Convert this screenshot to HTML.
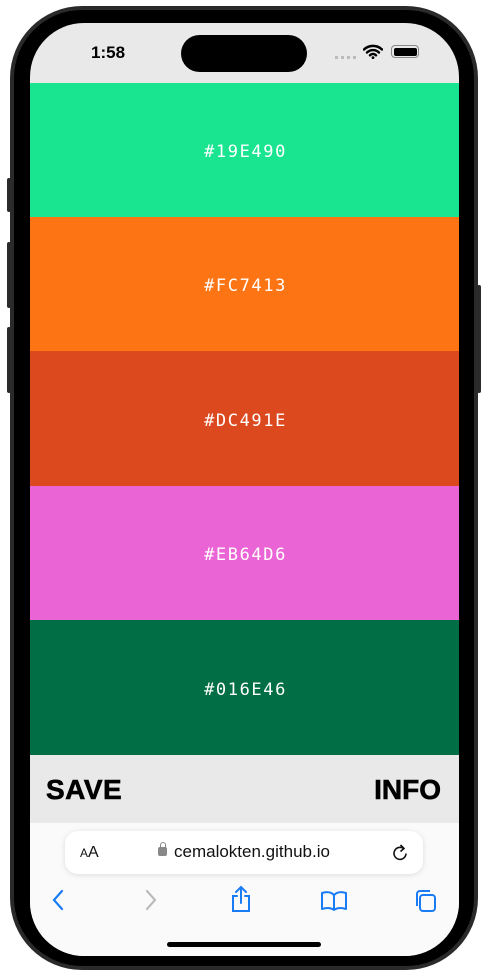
<!DOCTYPE html>
<html><head><style>
*{margin:0;padding:0;box-sizing:border-box}
body{width:488px;height:976px;background:#fff;position:relative;overflow:hidden;font-family:"Liberation Sans",sans-serif}
.outer{position:absolute;left:10px;top:6px;width:468px;height:964px;border-radius:72px;background:#2a2a2a}
.bezel{position:absolute;left:14px;top:10px;width:460px;height:956px;border-radius:68px;background:#000}
.screen{position:absolute;left:30px;top:23px;width:429px;height:933px;border-radius:54px;overflow:hidden;background:#e9e9e9}
.btn{position:absolute;background:#2a2a2a;width:4px;border-radius:2px}
.band{position:absolute;left:0;width:429px;display:flex;align-items:center;justify-content:center;color:#fff;font-family:"DejaVu Sans Mono","Liberation Mono",monospace;font-size:17px;letter-spacing:1.6px;padding-top:4px;padding-left:2px}
.island{position:absolute;left:151px;top:12px;width:126px;height:37px;border-radius:19px;background:#000}
</style></head><body>
<div class="btn" style="left:7px;top:178px;height:34px"></div>
<div class="btn" style="left:7px;top:242px;height:66px"></div>
<div class="btn" style="left:7px;top:327px;height:66px"></div>
<div class="btn" style="left:477px;top:285px;height:108px"></div>
<div class="outer"></div>
<div class="bezel"></div>
<div class="screen">
  <div style="position:absolute;left:61px;top:20px;font-size:17px;font-weight:bold;color:#000">1:58</div>
  <div class="island"></div>
  <div style="position:absolute;left:305px;top:33px;width:22px;height:3px;background:repeating-linear-gradient(90deg,#bbb 0 3px,transparent 3px 6px)"></div>
  <svg style="position:absolute;left:333px;top:21px" width="20" height="15" viewBox="0 0 20 15"><path d="M1 5.5a13 13 0 0 1 18 0M4 8.5a8.5 8.5 0 0 1 12 0M7 11.3a4 4 0 0 1 6 0" stroke="#000" stroke-width="2.4" fill="none" stroke-linecap="round"/><circle cx="10" cy="13.6" r="1.4"/></svg>
  <div style="position:absolute;left:361px;top:22px;width:28px;height:13px;border:1.5px solid #888;border-radius:4px;padding:1.5px"><div style="width:100%;height:100%;background:#000;border-radius:2px"></div></div>
  <div class="band" style="top:60px;height:134px;background:#19E490">#19E490</div>
  <div class="band" style="top:194px;height:134px;background:#FC7413">#FC7413</div>
  <div class="band" style="top:328px;height:135px;background:#DC491E">#DC491E</div>
  <div class="band" style="top:463px;height:134px;background:#EB64D6">#EB64D6</div>
  <div class="band" style="top:597px;height:135px;background:#016E46">#016E46</div>
  <div style="position:absolute;left:0;top:732px;width:429px;height:68px;background:#e9e9e9">
    <div style="position:absolute;left:16px;top:19px;font-size:28px;font-weight:bold;color:#000;letter-spacing:0.5px;-webkit-text-stroke:0.6px #000">SAVE</div>
    <div style="position:absolute;right:18px;top:19px;font-size:28px;font-weight:bold;color:#000;-webkit-text-stroke:0.6px #000">INFO</div>
  </div>
  <div style="position:absolute;left:0;top:800px;width:429px;height:133px;background:#fafafa">
    <div style="position:absolute;left:35px;top:8px;width:358px;height:43px;background:#fff;border-radius:13px;box-shadow:0 1px 6px rgba(0,0,0,.12)">
      <div style="position:absolute;left:15px;top:13px;font-size:16px;color:#111"><span style="font-size:12px">A</span>A</div>
      <div style="position:absolute;left:93px;top:16px;width:9px;height:9px;background:#888;border-radius:2px"></div>
      <div style="position:absolute;left:94.5px;top:11px;width:6px;height:7px;border:1.5px solid #888;border-radius:3px 3px 0 0"></div>
      <div style="position:absolute;left:109px;top:11px;font-size:17px;color:#111">cemalokten.github.io</div>
      <svg style="position:absolute;left:326px;top:12px" width="18" height="20" viewBox="0 0 18 20"><path d="M12.5 5.5A6 6 0 1 0 15 10.5" stroke="#111" stroke-width="1.6" fill="none"/><path d="M9.5 2l3.5 3.5-3.5 3" stroke="#111" stroke-width="1.6" fill="none"/></svg>
    </div>
    <svg style="position:absolute;left:21px;top:66px" width="14" height="22" viewBox="0 0 14 22"><path d="M11 2L3 11l8 9" stroke="#1a7cf5" stroke-width="2.2" fill="none" stroke-linecap="round"/></svg>
    <svg style="position:absolute;left:114px;top:66px" width="14" height="22" viewBox="0 0 14 22"><path d="M3 2l8 9-8 9" stroke="#bbb" stroke-width="2.2" fill="none" stroke-linecap="round"/></svg>
    <svg style="position:absolute;left:200px;top:62px" width="22" height="28" viewBox="0 0 22 28"><path d="M7 11H3v15h16V11h-4M11 2v16M6 7l5-5 5 5" stroke="#1a7cf5" stroke-width="2" fill="none" stroke-linecap="round"/></svg>
    <svg style="position:absolute;left:290px;top:67px" width="28" height="22" viewBox="0 0 28 22"><path d="M14 5C10 1 5 2 2 3v16c3-1 8-2 12 1 4-3 9-2 12-1V3c-3-1-8-2-12 2zM14 5v15" stroke="#1a7cf5" stroke-width="2" fill="none" stroke-linejoin="round"/></svg>
    <svg style="position:absolute;left:383px;top:66px" width="24" height="24" viewBox="0 0 24 24"><path d="M4 17V5a3 3 0 0 1 3-3h10" stroke="#1a7cf5" stroke-width="2" fill="none"/><rect x="7" y="6" width="15" height="16" rx="3" stroke="#1a7cf5" stroke-width="2" fill="none"/></svg>
    <div style="position:absolute;left:137px;top:119px;width:154px;height:5px;border-radius:3px;background:#000"></div>
  </div>
</div>
</body></html>
